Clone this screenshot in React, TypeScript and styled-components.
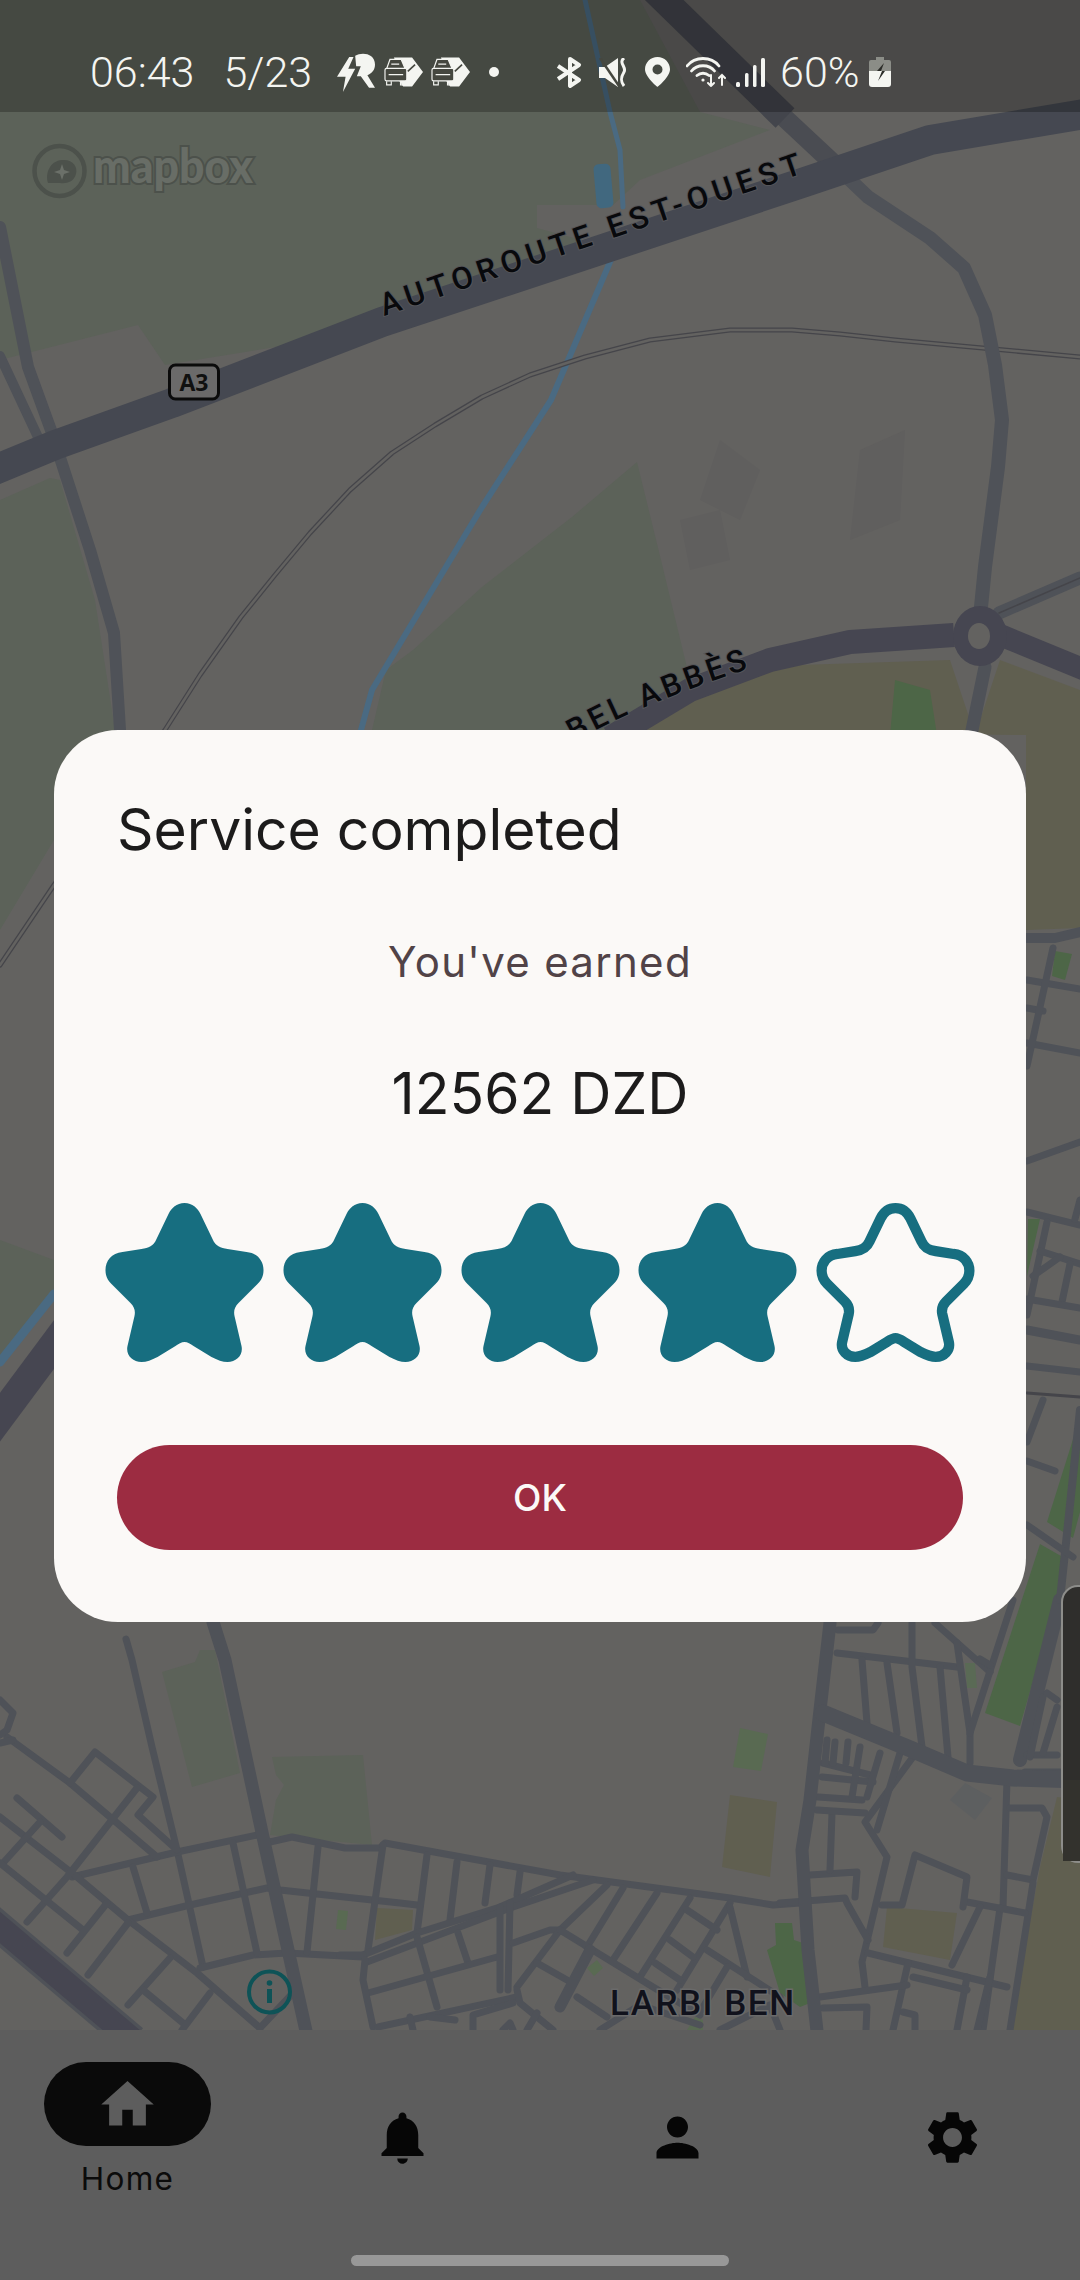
import React from "react";
import styled, { createGlobalStyle } from "styled-components";
import { MdHome, MdNotifications, MdPerson, MdSettings } from "react-icons/md";

const Global = createGlobalStyle`
  html, body { margin: 0; padding: 0; background: #636260; }
  * { box-sizing: border-box; }
`;

const Page = styled.div`
  position: relative;
  width: 1080px;
  height: 2280px;
  overflow: hidden;
  display: flex;
  flex-direction: column;
  background: #636260;
  font-family: Inter, "Liberation Sans", sans-serif;
`;

const MapCanvas = styled.svg`
  position: absolute;
  left: 0;
  top: 0;
  display: block;
`;

const StatusBar = styled.header`
  position: relative;
  height: 112px;
  flex: none;
  display: flex;
  align-items: center;
  padding: 32px 0 0 90px;
  background: rgba(0, 0, 0, 0.25);
  color: #f4f5f1;
  font-family: Roboto, sans-serif;
  font-weight: 300;
  font-size: 43px;
`;

const StatusText = styled.span<{ $gap: number }>`
  margin-right: ${(p) => p.$gap}px;
  line-height: 44px;
`;

const StatusIcon = styled.svg<{ $gap: number }>`
  flex: none;
  display: block;
  margin-right: ${(p) => p.$gap}px;
`;

const Spacer = styled.div`
  flex: 1;
`;

const NavBar = styled.nav`
  position: relative;
  flex: none;
  height: 250px;
  padding: 0 44px 36px;
  display: flex;
  justify-content: space-between;
  align-items: center;
  background: #5d5d5d;
`;

const NavItem = styled.div<{ $active?: boolean }>`
  width: 167px;
  display: flex;
  flex-direction: column;
  align-items: center;
  color: #060606;
  padding-bottom: ${(p) => (p.$active ? 12 : 0)}px;
`;

const NavPill = styled.div<{ $active?: boolean }>`
  width: 167px;
  height: ${(p) => (p.$active ? 84 : 63)}px;
  border-radius: 42px;
  display: flex;
  align-items: center;
  justify-content: center;
  background: ${(p) => (p.$active ? "#0a0a0a" : "transparent")};
  color: ${(p) => (p.$active ? "#5d5d5d" : "#060606")};
`;

const NavLabel = styled.span`
  margin-top: 12px;
  font-size: 31.5px;
  line-height: 42px;
  letter-spacing: 1.3px;
  color: #0b0b0b;
`;

const HomeIndicator = styled.div`
  position: absolute;
  left: 351px;
  bottom: 14px;
  width: 378px;
  height: 11px;
  border-radius: 6px;
  background: #989898;
`;

const Dialog = styled.section`
  position: absolute;
  left: 54px;
  top: 730px;
  width: 972px;
  height: 892px;
  border-radius: 64px;
  background: #fbf9f7;
  padding: 0 63px;
  display: flex;
  flex-direction: column;
`;

const Title = styled.h2`
  margin: 61px 0 0;
  font-size: 57px;
  line-height: 78px;
  font-weight: 400;
  color: #1c1b1b;
`;

const Earned = styled.p`
  margin: 65px 0 0;
  text-align: center;
  font-size: 42px;
  line-height: 56px;
  letter-spacing: 1.3px;
  color: #514347;
`;

const Amount = styled.p`
  margin: 65px 0 0;
  text-align: center;
  font-size: 57px;
  line-height: 78px;
  color: #1c1b1b;
`;

const Stars = styled.div`
  margin: 70px -12px 0;
  display: flex;
  justify-content: space-between;
`;

const OkButton = styled.button`
  margin-top: 83px;
  height: 105px;
  border: 0;
  border-radius: 53px;
  background: #9c2c41;
  color: #fbf9f7;
  font-family: Inter, sans-serif;
  font-size: 37px;
  font-weight: 500;
`;

const STAR =
  "M79 0C87 0 92 5 95 11L107 36C110 43 115 45 122 46L141 49C152 50 158 58 158 67C158 73 156 77 152 81L133 100C129 104 128 108 129 113L136 143C138 152 131 159 122 159C117 159 112 157 106 154L88 143C85 141 82 139 79 139C76 139 73 141 70 143L52 154C46 157 41 159 36 159C27 159 20 152 22 143L29 113C30 108 29 104 25 100L6 81C2 77 0 73 0 67C0 58 6 50 17 49L36 46C43 45 48 43 51 36L63 11C66 5 71 0 79 0Z";

const Star = ({ filled }: { filled: boolean }) => (
  <svg width="159" height="159" viewBox={filled ? "0 0 158 159" : "-5.5 -5.500 169 170"}>
    <path d={STAR} fill={filled ? "#176e80" : "none"} stroke={filled ? "none" : "#176e80"} strokeWidth="11" />
  </svg>
);

/* ---------- map data ---------- */
const LAND = "#636260";
const GREEN = "#5c6259";
const BRIGHT = "#4d6647";
const MID = "#596a52";
const TAN = "#605f50";
const ROAD = "#4f5258";
const MOTOR = "#464651";
const WATER = "#4a6a82";

const RAIL =
  "1080,357 895,340 840,334 792,330 730,330 650,340 585,357 530,375 482,397 435,425 392,453 350,490 310,533 275,575 241,617 200,675 165,730 54,885 0,965";

const areas: [string, string][] = [
  ["0,0 640,0 700,112 770,130 640,180 613,205 537,205 537,228 600,245 380,330 165,365 138,325 0,360", GREEN],
  ["0,500 50,478 60,480 95,600 115,730 54,840 0,930", GREEN],
  ["0,1240 54,1260 54,1300 0,1362", GREEN],
  ["637,462 572,517 482,587 413,650 386,670 372,730 620,730 690,680 661,560", GREEN],
  ["620,730 700,680 800,665 950,660 975,735 1000,660 1080,690 1080,928 1026,930 1026,735", TAN],
  ["890,735 895,680 930,690 937,735", BRIGHT],
  ["1055,951 1072,954 1065,980 1052,976", BRIGHT],
  ["1028,1219 1040,1219 1027,1276", BRIGHT],
  ["1040,1544 1068,1560 1020,1726 985,1713", BRIGHT],
  ["1080,1417 1047,1522 1073,1538 1080,1512", BRIGHT],
  ["162,1672 195,1662 200,1650 215,1650 240,1773 192,1787", GREEN],
  ["272,1757 363,1755 372,1845 270,1835 276,1800 284,1785 276,1775", GREEN],
  ["338,1910 348,1911 346,1930 336,1929", MID],
  ["377,1908 413,1910 412,1930 375,1940", TAN],
  ["730,1795 777,1802 770,1877 722,1867", TAN],
  ["740,1728 768,1734 761,1771 733,1767", MID],
  ["587,1968 597,1960 603,1968 594,1976", MID],
  ["767,1950 776,1945 775,1923 792,1923 794,1940 803,1943 810,2003 800,2007 780,1993", BRIGHT],
  ["687,2030 695,2017 703,2020 703,2030", MID],
  ["965,1663 975,1663 977,1688 967,1688", "#5a6a55"],
  ["887,1907 957,1913 950,1960 883,1947", TAN],
  ["1057,1797 1080,1800 1080,2030 1010,2030 1040,1867", TAN],
  ["950,1800 965,1783 992,1798 975,1820", "#5d5f60"],
  ["720,440 760,470 740,520 700,500", "#605f5e"],
  ["860,450 905,430 900,520 850,540", "#605f5e"],
  ["680,520 720,510 730,560 690,570", "#605f5e"],
];

const thin: string[] = [
  /* bottom-left block */
  "126,1639 132,1660 152,1747 177,1850 203,1967",
  "72,1877 177,1852 257,1835 270,1842 292,1837 345,1848 380,1848 385,1843 560,1875 730,1898 773,1905 800,1903",
  "128,1920 190,1905 267,1888 280,1890 400,1903 417,1905",
  "200,1968 253,1955 287,1953 363,1957",
  "233,1843 257,1953", "133,1867 147,1913", "318,1847 307,1952", "383,1845 368,1950",
  "0,1817 77,1877 128,1920 197,1973 260,2028",
  "7,1737 70,1783 110,1817 157,1857",
  "70,1783 95,1752 153,1797 138,1815 177,1850",
  "137,1788 67,1877 27,1922", "17,1798 62,1837", "40,1822 3,1863", "0,1863 83,1930",
  "107,1903 67,1953", "128,1923 88,1975", "170,1958 128,2005", "143,1990 183,2023",
  "210,1993 182,2030", "260,2028 293,1993", "0,1700 13,1713 7,1730 0,1735", "0,1743 13,1740",
  /* bottom-middle block */
  "427,1855 417,1933", "457,1862 450,1920", "490,1865 485,1903", "520,1872 517,1895",
  "363,1955 417,1933 500,1907 573,1875", "367,1962 513,1907 593,1880",
  "340,1955 363,1955", "417,1937 437,2007", "458,1933 468,1963",
  "368,1993 497,1957", "365,1960 363,1980 373,2027", "378,2027 517,1997",
  "500,1907 500,1990", "510,1903 508,1990", "513,1943 550,1930 560,1930",
  "607,1885 560,1930 517,1987", "623,1888 587,1947", "657,1893 613,1960",
  "690,1898 640,1977", "730,1903 677,1990", "730,1907 747,1977",
  "560,1930 653,1987 700,2015", "687,1910 717,1930", "670,1940 693,1957", "655,1963 680,1980",
  "707,1950 780,1997", "727,1967 700,2012", "537,1963 567,1980", "577,1997 607,2017",
  "517,1990 520,2003 553,2030", "473,2030 473,2015 513,2003", "413,2030 410,2017", "430,2017 455,2020",
  "503,2030 510,2023 513,2030", "527,2030 537,2013", "600,2030 640,2005 700,2025", "720,2030 770,2005 780,2030",
  /* bottom-right block */
  "838,1630 873,1630 878,1623", "837,1653 957,1667", "862,1660 867,1723", "887,1663 897,1733",
  "912,1623 912,1667 922,1747", "940,1667 948,1757", "935,1623 990,1672",
  "957,1643 970,1733 970,1763", "1013,1600 970,1733",
  "1007,1780 1003,1907", "1010,1808 1042,1808 1047,1817 1033,1880 1007,1875",
  "1033,1883 1010,2030", "1000,1908 983,2030", "967,1902 1025,1913", "980,1907 952,1965",
  "963,1907 967,1877 915,1855 902,1905 882,1905",
  "913,1757 865,1822 887,1857 868,1937 862,1962 865,1987", "900,1753 877,1830",
  "868,1953 1007,1987", "908,1963 893,2030", "967,1977 957,2030", "990,1977 977,2030",
  "913,1977 967,1990", "820,1997 907,1985", "823,2008 867,2007 866,2030",
  "903,2012 915,2015 915,2030", "780,1903 845,1898 847,1903 868,1940",
  "810,1875 857,1872 855,1897", "832,1813 830,1870",
  "817,1810 865,1813", "818,1797 862,1800", "822,1777 873,1782", "823,1763 870,1775",
  "827,1740 825,1763", "835,1742 833,1763", "848,1742 846,1763", "860,1747 852,1797", "880,1753 867,1797",
  "1027,1755 1057,1755", "1025,1772 1060,1772", "1043,1697 1030,1757", "1057,1707 1043,1753", "1047,1693 1057,1700",
  /* right of the dialog */
  "1027,980 1080,989", "1027,1008 1043,1011", "1027,1043 1080,1053", "1053,948 1027,1066",
  "1027,1161 1080,1142", "1027,1212 1080,1225", "1080,1200 1075,1219", "1047,1222 1027,1315",
  "1040,1251 1080,1264", "1033,1276 1060,1257", "1070,1264 1062,1302", "1027,1299 1080,1308",
  "1027,1366 1080,1372", "1043,1400 1027,1442", "1027,1461 1055,1471", "1027,1525 1073,1557",
  "980,1659 990,1665",
];

const App = () => (
  <Page>
    <Global />
    <MapCanvas width="1080" height="2030" viewBox="0 0 1080 2030">
      <rect width="1080" height="2030" fill={LAND} />
      {areas.map(([pts, fill], i) => (
        <polygon key={i} points={pts} fill={fill} />
      ))}
      <g fill="none" strokeLinecap="round" strokeLinejoin="round">
        {/* water */}
        <polyline points="585,0 610,112 620,150 623,207" stroke={WATER} strokeWidth="5" />
        <polyline points="613,255 551,400 482,507 372,690 361,730" stroke={WATER} strokeWidth="6" />
        <polyline points="54,1294 0,1362" stroke={WATER} strokeWidth="9" />
        <rect x="595" y="164" width="17" height="44" rx="5" fill="#41687f" transform="rotate(-5 603 186)" />

        {/* rail */}
        <polyline points={RAIL} stroke="#45454a" strokeWidth="5" />
        <polyline points={RAIL} stroke={LAND} strokeWidth="2.5" />
        <polyline points="1027,1393 1080,1397" stroke="#45454a" strokeWidth="3" />

        {/* arterials */}
        <polyline points="0,227 28,367 52,433 90,550 114,633 120,730" stroke={ROAD} strokeWidth="12" />
        <polyline points="0,356 44,450" stroke={ROAD} strokeWidth="10" />
        <polyline points="778,112 826,157 868,197 930,238 964,268 985,315 995,365 1002,420 998,467 985,567 981,607" stroke={ROAD} strokeWidth="14" />
        <polyline points="760,95 835,165" stroke="#4a4c52" strokeWidth="19" strokeLinecap="butt" />
        <polyline points="654,-10 785,118" stroke="#43454c" strokeWidth="27" strokeLinecap="butt" />
        <polyline points="999,613 1080,578" stroke={ROAD} strokeWidth="13" />
        <polyline points="985,667 971,735" stroke={ROAD} strokeWidth="13" />
        <polyline points="999,613 1080,578" stroke="#45454a" strokeWidth="1.5" />
        <polyline points="1027,938 1055,938 1080,932" stroke={ROAD} strokeWidth="10" />
        <polyline points="1060,1600 1020,1760" stroke={ROAD} strokeWidth="14" />
        <polyline points="1080,1410 1060,1600" stroke={ROAD} strokeWidth="8" />
        <polyline points="1027,1330 1080,1340" stroke={ROAD} strokeWidth="9" />

        {/* streets */}
        {thin.map((p, i) => (
          <polyline key={i} points={p} stroke={ROAD} strokeWidth="7" />
        ))}
        <polyline points="213,1622 225,1660 263,1837 308,2040" stroke={ROAD} strokeWidth="13" />
        <polyline points="830,1623 820,1710 810,1800 802,1850 808,1950 818,2040" stroke={ROAD} strokeWidth="13" />
        <polyline points="823,1713 913,1750 967,1773 1013,1778 1080,1780" stroke={ROAD} strokeWidth="17" />
        <polyline points="590,1950 560,2007" stroke={ROAD} strokeWidth="11" />

        {/* motorways */}
        <polyline points="-10,472 55,445 172,403 382,322 606,248 802,183 930,140 1090,113" stroke="#454851" strokeWidth="30" strokeLinecap="butt" />
        <polyline points="954,635 850,642 770,660 690,690 610,738" stroke={MOTOR} strokeWidth="24" strokeLinecap="butt" />
        <polyline points="1000,635 1090,672" stroke={MOTOR} strokeWidth="22" strokeLinecap="butt" />
        <polyline points="-20,1444 70,1323" stroke={MOTOR} strokeWidth="29" strokeLinecap="butt" />
        <polyline points="-10,1919 133,2040" stroke={ROAD} strokeWidth="31" strokeLinecap="butt" />
        <polyline points="-10,1919 133,2040" stroke={MOTOR} strokeWidth="24" strokeLinecap="butt" />
      </g>

      {/* roundabout */}
      <ellipse cx="980" cy="636" rx="27" ry="30" fill={MOTOR} />
      <ellipse cx="979" cy="636" rx="11" ry="13" fill={LAND} />

      {/* side widget */}
      <rect x="1062" y="1586" width="40" height="276" rx="16" fill="#2f2e2c" stroke="#8d8d8a" strokeWidth="2" />
      <rect x="1063" y="1780" width="17" height="81" fill="#33322d" />

      {/* mapbox logo */}
      <circle cx="59.5" cy="171" r="25" fill="none" stroke="#4c514b" strokeWidth="4.5" />
      <path d="M48 183c-3-10 2-22 14-23 11-1 16 7 14 14-2 8-10 10-16 9z" fill="#4c514b" />
      <path d="M62 164l2 6 6 2-6 2-2 6-2-6-6-2 6-2z" fill="#6b7069" />
      <text x="93" y="183" fontFamily="Lato, sans-serif" fontWeight="900" fontSize="47" textLength="160" lengthAdjust="spacingAndGlyphs" fill="#686d66" stroke="#4c514b" strokeWidth="4" paintOrder="stroke">mapbox</text>

      {/* labels */}
      <text transform="translate(384 316) rotate(-18.8)" fontFamily="Roboto, sans-serif" fontWeight="500" fontSize="31" letterSpacing="3" textLength="446" fill="#08090c" stroke="#55565a" strokeWidth="2" paintOrder="stroke">AUTOROUTE EST-OUEST</text>
      <path id="belabbes" d="M574 742Q650 698 790 656" fill="none" />
      <text fontFamily="Roboto, sans-serif" fontWeight="500" fontSize="31" letterSpacing="4" fill="#08090c" stroke="#55565a" strokeWidth="2" paintOrder="stroke">
        <textPath href="#belabbes">BEL ABBÈS</textPath>
      </text>
      <rect x="169.5" y="365" width="49" height="34" rx="6" fill="#6b6a6a" stroke="#0b0b0b" strokeWidth="3" />
      <text x="194" y="391" textAnchor="middle" fontFamily="'Open Sans', sans-serif" fontWeight="700" fontSize="23" fill="#101010">A3</text>
      <text x="610" y="2015" fontFamily="Roboto, sans-serif" fontWeight="500" fontSize="35" textLength="184" fill="#11121c" stroke="#6a6a6a" strokeWidth="3" paintOrder="stroke">LARBI BEN</text>

      {/* info */}
      <circle cx="269.5" cy="1992" r="20.5" fill="none" stroke="#0e5357" strokeWidth="4" />
      <circle cx="269.5" cy="1983" r="2.8" fill="#0e5357" />
      <rect x="267" y="1989" width="5" height="14" fill="#0e5357" />
    </MapCanvas>

    <StatusBar>
      <StatusText $gap={29}>06:43</StatusText>
      <StatusText $gap={25}>5/23</StatusText>
      <StatusIcon $gap={9} width="38" height="39" viewBox="0 0 115 118" fill="#f4f5f1">
        <path d="M37 12L0 72h26l-8 46 37-70H34l16-36z" />
        <path d="M55 8C75-4 115 0 115 35c0 17-10 27-23 32l23 38H97L72 70H60l12-30H58z" />
      </StatusIcon>
      {[0, 1].map((k) => (
        <StatusIcon key={k} $gap={k ? 19 : 8} width="39" height="30" viewBox="0 0 118 88">
          <path d="M30 0h55l33 44-33 44H58L45 70 40 25z" fill="#f4f5f1" />
          <path d="M18 6h34l12 28H8z" fill="#45473f" stroke="#f4f5f1" strokeWidth="3.5" />
          <rect x="3" y="33" width="66" height="38" rx="5" fill="#45473f" stroke="#f4f5f1" strokeWidth="3.5" />
          <path d="M8 72v11h14V72M50 72v11h14V72M14 52h44M22 20h24" stroke="#f4f5f1" strokeWidth="3.5" fill="none" />
          <path d="M72 42l22-20" stroke="#45473f" strokeWidth="5" />
        </StatusIcon>
      ))}
      <StatusIcon $gap={57} width="10" height="10" viewBox="0 0 10 10" fill="#f4f5f1">
        <circle cx="5" cy="5" r="5" />
      </StatusIcon>
      <StatusIcon $gap={16} width="27" height="31" viewBox="0 0 27 31" fill="none" stroke="#f4f5f1" strokeWidth="4">
        <path d="M2 9l21 14-9 6V2l9 6L2 22" strokeLinejoin="round" />
      </StatusIcon>
      <StatusIcon $gap={17} width="29" height="29" viewBox="0 0 29 29">
        <path d="M0 9h6L19 0v29L6 20H0z" fill="#f4f5f1" />
        <path d="M1 0l19 28" stroke="#45473f" strokeWidth="2.500" />
        <path d="M25 0c-6 5 3 9 0 14s-4 9 0 14" stroke="#f4f5f1" strokeWidth="3" fill="none" />
      </StatusIcon>
      <StatusIcon $gap={16} width="25" height="30" viewBox="0 0 25 30">
        <path fillRule="evenodd" fill="#f4f5f1" d="M12.500 0C5.600 0 0 5.500 0 12.300 0 20 12.500 30 12.500 30S25 20 25 12.300C25 5.500 19.400 0 12.500 0zm0 7.500a5 5 0 1 1 0 10 5 5 0 0 1 0-10z" />
      </StatusIcon>
      <StatusIcon $gap={10} width="40" height="30" viewBox="0 0 40 30" fill="none" stroke="#f4f5f1" strokeWidth="2.8" strokeLinecap="round">
        <path d="M1 9C9-1 25-1 33 9M5.500 14C11 7 23 7 28.500 14M11 18.500c3.500-3 8.500-3 12 0" />
        <circle cx="17" cy="23" r="1.600" fill="#f4f5f1" stroke="none" />
        <path d="M25 18v11m-3-3l3 3 3-3M36 28V18m-3 3l3-3 3 3" strokeWidth="2" />
      </StatusIcon>
      <StatusIcon $gap={15} width="29" height="29" viewBox="0 0 29 29" fill="#f4f5f1">
        <rect x="0" y="24" width="4" height="5" rx="1.500" />
        <rect x="9" y="15" width="3.500" height="14" rx="1.500" />
        <rect x="17" y="7" width="3.500" height="22" rx="1.500" />
        <rect x="25" y="0" width="4" height="29" rx="1.500" />
      </StatusIcon>
      <StatusText $gap={9}>60%</StatusText>
      <StatusIcon $gap={0} width="22" height="30" viewBox="0 0 22 30">
        <path d="M7 0h8v3h5a2 2 0 0 1 2 2v9H0V5a2 2 0 0 1 2-2h5z" fill="#8b8d87" />
        <path d="M0 14h22v13a3 3 0 0 1-3 3H3a3 3 0 0 1-3-3z" fill="#f4f5f1" />
        <path d="M15 6l-7 8h5l-4 10 7-10h-4l3-8z" fill="#2b2c28" />
      </StatusIcon>
    </StatusBar>

    <Spacer />

    <NavBar>
      <NavItem $active>
        <NavPill $active><MdHome size={63} /></NavPill>
        <NavLabel>Home</NavLabel>
      </NavItem>
      <NavItem><NavPill><MdNotifications size={63} /></NavPill></NavItem>
      <NavItem><NavPill><MdPerson size={63} /></NavPill></NavItem>
      <NavItem><NavPill><MdSettings size={63} /></NavPill></NavItem>
      <HomeIndicator />
    </NavBar>

    <Dialog>
      <Title>Service completed</Title>
      <Earned>You've earned</Earned>
      <Amount>12562 DZD</Amount>
      <Stars>
        {[true, true, true, true, false].map((f, i) => (
          <Star key={i} filled={f} />
        ))}
      </Stars>
      <OkButton>OK</OkButton>
    </Dialog>
  </Page>
);

export default App;
